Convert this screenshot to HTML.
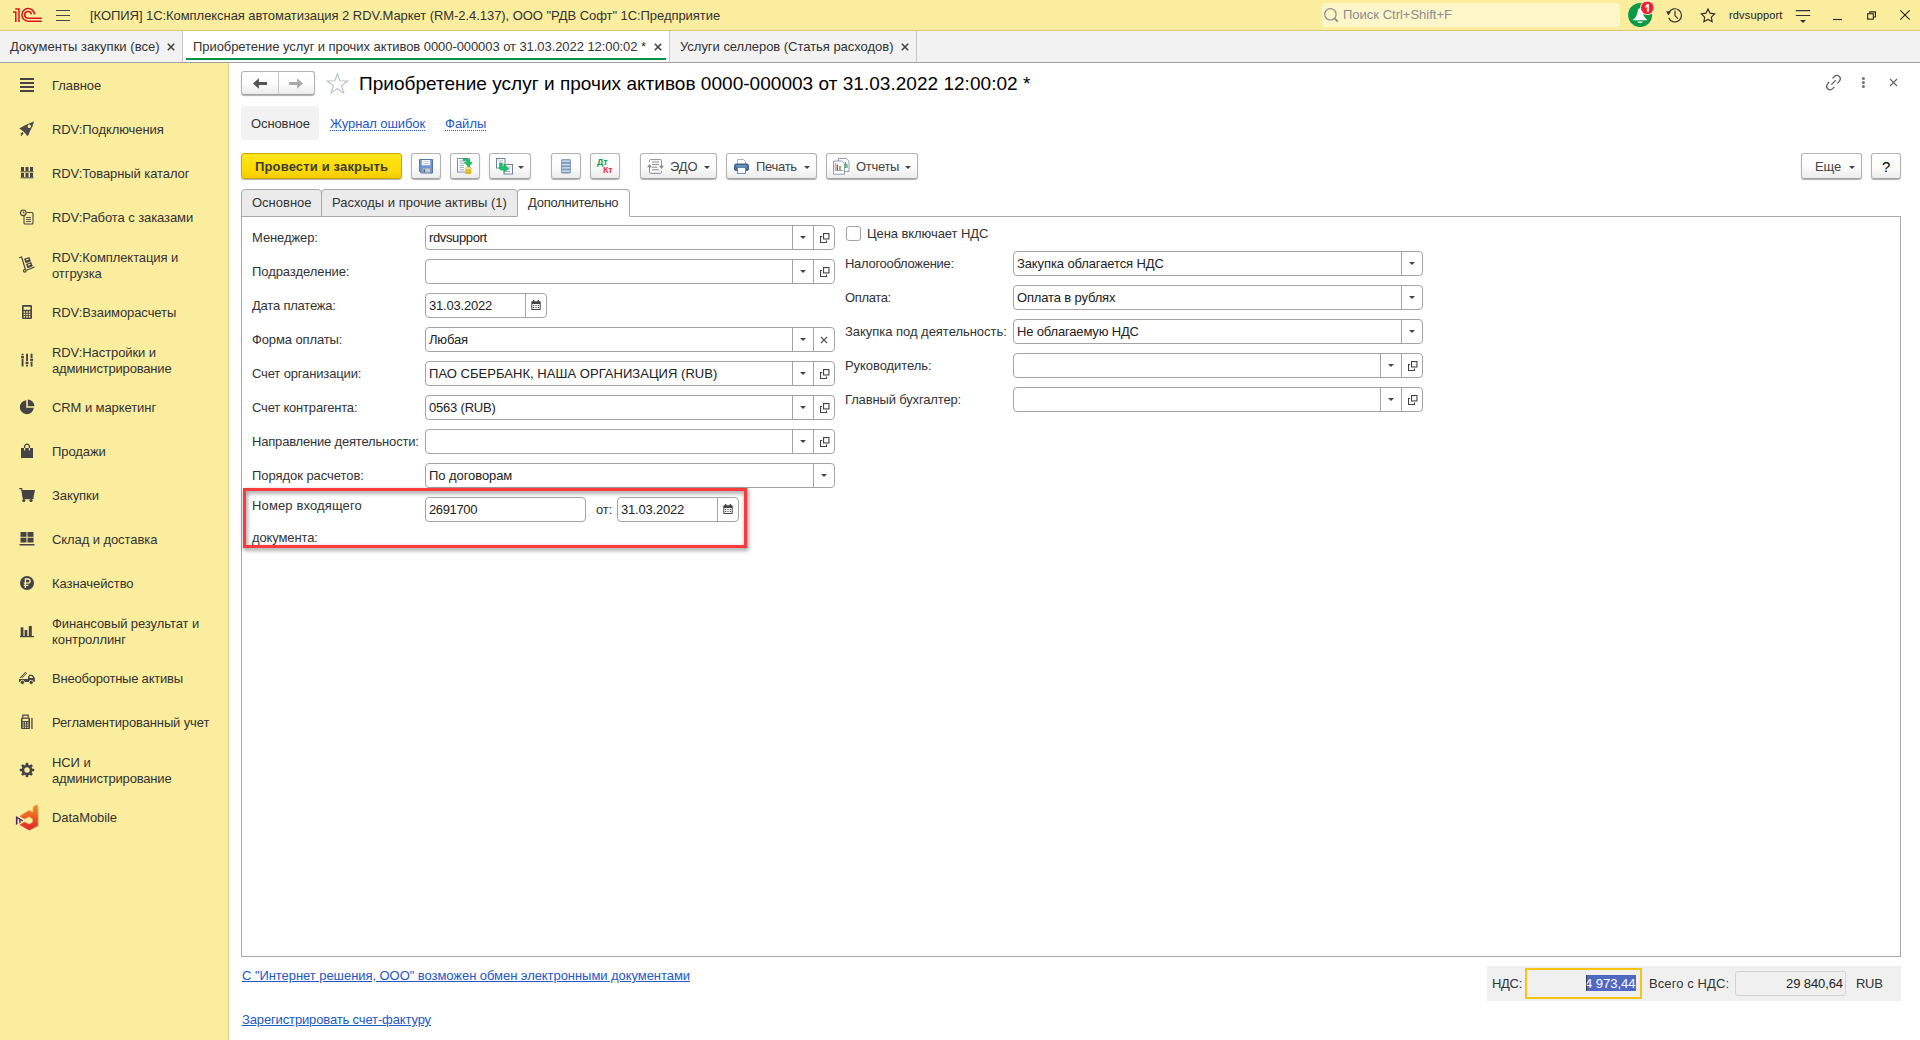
<!DOCTYPE html>
<html lang="ru">
<head>
<meta charset="utf-8">
<title>1C</title>
<style>
*{box-sizing:border-box;margin:0;padding:0}
html,body{width:1920px;height:1040px;overflow:hidden;background:#fff}
body{font-family:"Liberation Sans",sans-serif;font-size:13px;color:#333;position:relative}
.abs{position:absolute}
.t{position:absolute;white-space:nowrap;line-height:16px}
/* title bar */
#titlebar{position:absolute;left:0;top:0;width:1920px;height:31px;background:#fbed9e;border-bottom:1px solid #d9c774}
#titlebar .ttl{left:90px;top:8px;font-size:13px;color:#333;letter-spacing:-.057px}
#search{position:absolute;left:1322px;top:3px;width:298px;height:24px;background:#fdf6c9;border-radius:4px}
#search .t{left:21px;top:4px;font-size:13px;color:#8c8c8c}
/* tab bar */
#tabbar{position:absolute;left:0;top:31px;width:1920px;height:32px;background:#f2f2f2;border-bottom:1px solid #a0a0a0}
.tab{position:absolute;top:0;height:31px;border-right:1px solid #c8c8c8;font-size:14px;color:#333}
.tab .t{top:8px;font-size:13px;letter-spacing:-.068px}
.tab.act{background:#fff}
.tab.act:after{content:"";position:absolute;left:3px;right:3px;bottom:2px;height:2px;background:#009646}
.tabx{position:absolute;top:12px;width:8px;height:8px}
/* sidebar */
#side{position:absolute;left:0;top:63px;width:229px;height:977px;background:#fbed9e;border-right:1px solid #d9cc86}
.si{position:absolute;left:52px;letter-spacing:-.08px;font-size:13px;color:#333;line-height:16px;white-space:nowrap}
.ic{position:absolute;left:17px;width:20px;height:20px}
/* main */
.lbl{position:absolute;white-space:nowrap;letter-spacing:-.1px;font-size:13px;line-height:16px;color:#333}
.fld{position:absolute;height:25px;border:1px solid #a3a3a3;border-radius:4px;background:#fff;font-size:13px;line-height:23px;color:#222;padding-left:3px;white-space:nowrap;overflow:hidden}
.fb{position:absolute;top:0;bottom:0;width:21px;border-left:1px solid #a3a3a3}
.fb.dd:after{content:"";position:absolute;left:7px;top:10px;border-left:3px solid transparent;border-right:3px solid transparent;border-top:3.5px solid #444}
.btn{position:absolute;height:26px;border:1px solid #b3b3b3;border-bottom-color:#a2a2a2;border-radius:3px;background:linear-gradient(#ffffff 0%,#fdfdfd 50%,#ececec 100%);box-shadow:0 1px 1px rgba(0,0,0,.32);font-size:13px;color:#333}
.btn .t{top:4px;font-size:13px;letter-spacing:-.1px;color:#444}
.car{position:absolute;top:12px;border-left:3px solid transparent;border-right:3px solid transparent;border-top:3px solid #444}
a.lnk{position:absolute;white-space:nowrap;color:#2458c4;font-size:13px;line-height:16px;text-decoration:underline}

.dl{color:#2458c4;text-decoration:underline dotted;text-underline-offset:2px;text-decoration-thickness:1px}
.ybtn{background:linear-gradient(#ffe420 0%,#ffdc00 60%,#f5cc00 100%);border-color:#c9a800}
.itab{position:absolute;top:189px;height:28px;background:#ebebeb;border:1px solid #a8a8a8;border-radius:4px 4px 0 0}
.itab.act{background:#fff;border-bottom-color:#fff}
</style>
</head>
<body>
<!-- TITLE BAR -->
<div id="titlebar">
  <svg class="abs" style="left:12px;top:7px" width="32" height="16" viewBox="0 0 32 16"><g fill="none" stroke="#d9141c" stroke-width="1.500"><path d="M3.200 1.900 H7 V14.900"/><path d="M1 4.900 H3.800 V14.900"/><path d="M22.500 7.400 A6.300 6.300 0 1 0 16 14.200 H29.800"/><path d="M19.300 7.400 A3.300 3.300 0 1 0 16 11.200 H29.800"/></g></svg>
  <svg class="abs" style="left:55px;top:9px" width="16" height="13" viewBox="0 0 16 13"><g stroke="#444" stroke-width="1.2"><path d="M1 1.5h14M1 6.5h14M1 11.5h14"/></g></svg>
  <div class="t ttl">[КОПИЯ] 1С:Комплексная автоматизация 2 RDV.Маркет (RM-2.4.137), ООО "РДВ Софт" 1С:Предприятие</div>
  <div id="search">
    <svg class="abs" style="left:1px;top:4px" width="17" height="17" viewBox="0 0 17 17"><circle cx="7.400" cy="7.300" r="5.700" fill="none" stroke="#8a8a8a" stroke-width="1.200"/><path d="M11.500 11.400 L14.800 14.600" stroke="#8a8a8a" stroke-width="1.700"/></svg>
    <div class="t">Поиск Ctrl+Shift+F</div>
  </div>

  <svg class="abs" style="left:1626px;top:0px" width="32" height="30" viewBox="0 0 32 30"><circle cx="14.100" cy="15" r="12" fill="#0e9944"/><path d="M14.100 8.200 C12.600 8.200 11.900 9.400 11.700 11 C11.300 14.500 10 17.600 6.600 20.200 H21.600 C18.200 17.600 16.900 14.500 16.500 11 C16.300 9.400 15.600 8.200 14.100 8.200 Z" fill="#fff"/><path d="M11.200 21.400 H17 C16.400 22.600 15.400 23 14.100 23 C12.800 23 11.800 22.600 11.200 21.400 Z" fill="#fff"/><circle cx="21.300" cy="7.800" r="7.300" fill="#fff"/><circle cx="21.300" cy="7.800" r="6.400" fill="#f2232a"/><path d="M19 6.600 L21.300 4 H22.900 V11.800 H20.900 V6.800 L19.600 8 Z" fill="#fff"/></svg>
  <svg class="abs" style="left:1665px;top:6px" width="20" height="19" viewBox="0 0 20 19"><g fill="none" stroke="#333" stroke-width="1.200"><path d="M3.900 6.600 A6.600 6.600 0 1 1 3.700 11.700"/><path d="M10 5 V9.600 L12.600 12.300" stroke-linecap="round"/></g><path d="M1 5.200 L6 5.600 L3.400 9.400 Z" fill="#333"/></svg>
  <svg class="abs" style="left:1699px;top:6px" width="18" height="18" viewBox="0 0 18 18"><path d="M9.00 3.00 L11.06 7.17 L15.66 7.84 L12.33 11.08 L13.11 15.66 L9.00 13.50 L4.89 15.66 L5.67 11.08 L2.34 7.84 L6.94 7.17 Z" fill="none" stroke="#2c2c2c" stroke-width="1.150" stroke-linejoin="miter"/></svg>
  <div class="t" style="left:1729px;top:7px;font-size:11px;color:#222;letter-spacing:.15px" id="user">rdvsupport</div>
  <svg class="abs" style="left:1795px;top:9px" width="16" height="15" viewBox="0 0 16 15"><g stroke="#333" stroke-width="1.200"><path d="M0.800 1.600 H15.200 M0.800 6.500 H15.200"/></g><path d="M5 11.100 H11 L8 14 Z" fill="#333"/></svg>
  <svg class="abs" style="left:1832px;top:18px" width="11" height="3" viewBox="0 0 11 3"><path d="M1 1.500 H10" stroke="#333" stroke-width="1.200"/></svg>
  <svg class="abs" style="left:1866px;top:10px" width="11" height="11" viewBox="0 0 11 11"><g fill="none" stroke="#262626" stroke-width="1.100"><rect x="1.650" y="3.750" width="5.700" height="5.400"/><path d="M3.750 3.200 V1.850 H9.450 V6.950 H7.900"/></g></svg>
  <svg class="abs" style="left:1899px;top:10px" width="12" height="11" viewBox="0 0 12 11"><path d="M1.300 0.300 L10.700 9.700 M10.700 0.300 L1.300 9.700" stroke="#262626" stroke-width="1.050"/></svg>
</div>
<!-- TAB BAR -->
<div id="tabbar">
  <div class="tab" style="left:0;width:183px"><div class="t" style="left:10px;letter-spacing:.03px">Документы закупки (все)</div><svg class="tabx" style="left:167px" width="8" height="8" viewBox="0 0 8 8"><path d="M0.800 0.800 L7.200 7.200 M7.200 0.800 L0.800 7.200" stroke="#444" stroke-width="1.600"/></svg></div>
  <div class="tab act" style="left:183px;width:487px"><div class="t" style="left:10px">Приобретение услуг и прочих активов 0000-000003 от 31.03.2022 12:00:02 *</div><svg class="tabx" style="left:471px" width="8" height="8" viewBox="0 0 8 8"><path d="M0.800 0.800 L7.200 7.200 M7.200 0.800 L0.800 7.200" stroke="#444" stroke-width="1.600"/></svg></div>
  <div class="tab" style="left:670px;width:247px"><div class="t" style="left:10px;letter-spacing:-.03px">Услуги селлеров (Статья расходов)</div><svg class="tabx" style="left:231px" width="8" height="8" viewBox="0 0 8 8"><path d="M0.800 0.800 L7.200 7.200 M7.200 0.800 L0.800 7.200" stroke="#444" stroke-width="1.600"/></svg></div>
</div>
<!-- SIDEBAR -->
<div id="side">
  <!-- icons: each svg 20x20 box positioned left:17 -->
  <svg class="ic" style="top:13px" width="20" height="20" viewBox="0 0 20 20"><g fill="#444"><rect x="3" y="2" width="14" height="2"/><rect x="3" y="6" width="14" height="2"/><rect x="3" y="10" width="14" height="2"/><rect x="3" y="14" width="14" height="2"/></g></svg>
  <div class="si" style="top:15px">Главное</div>

  <svg class="ic" style="top:56px" width="20" height="20" viewBox="0 0 20 20"><path fill="#4a4a4a" fill-rule="evenodd" d="M16.900 2.200 L13.150 3.900 L8.500 6 L2.200 9.400 L5.650 11.700 L9.100 15.200 L10 16.900 L11.400 16.300 L12.900 12.300 L15.500 7.400 Z M12.300 5.600 a1.700 1.700 0 1 0 .01 0 Z"/><path fill="#4a4a4a" d="M5.300 13 L6.600 14.600 L4.500 16.900 L3.600 16.600 L4.600 15 L3 15.300 Z"/></svg>
  <div class="si" style="top:59px">RDV:Подключения</div>

  <svg class="ic" style="top:100px" width="20" height="20" viewBox="0 0 20 20"><g fill="#444"><rect x="4" y="4" width="3" height="4"/><rect x="8.500" y="4" width="3" height="4"/><rect x="13" y="4" width="3" height="4"/><rect x="3.500" y="8.300" width="13" height="1"/><rect x="4" y="10" width="3" height="4"/><rect x="8.500" y="10" width="3" height="4"/><rect x="13" y="10" width="3" height="4"/><rect x="3.500" y="14.300" width="13" height="1"/></g></svg>
  <div class="si" style="top:103px">RDV:Товарный каталог</div>

  <svg class="ic" style="top:144px" width="20" height="20" viewBox="0 0 20 20"><g fill="none" stroke="#444" stroke-width="1.1"><circle cx="6.300" cy="5.800" r="2.800" fill="#fbed9e"/><path d="M9.500 5.500 H15 a1 1 0 0 1 1 1 V16 a1 1 0 0 1 -1 1 H8 a1 1 0 0 1 -1 -1 V9"/><path d="M6.300 4.200 V6 H7.700" stroke-width=".9"/><path d="M9 10.500 h5 M9 12.500 h5 M9 14.500 h5" stroke-width=".9"/></g></svg>
  <div class="si" style="top:147px">RDV:Работа с заказами</div>

  <svg class="ic" style="top:191px" width="20" height="20" viewBox="0 0 20 20"><g fill="none" stroke="#444" stroke-width="1.2"><path d="M2.200 3.800 L4.600 3 L8.400 15.500"/><circle cx="7.800" cy="16.800" r="1.300"/><path d="M9.300 16.200 L17.500 13"/></g><g fill="#444" transform="rotate(-20 12 9)"><rect x="8.800" y="3.400" width="5.600" height="4.600"/><rect x="8.800" y="8.800" width="5.600" height="4.600"/></g><g fill="#fbed9e" transform="rotate(-20 12 9)"><rect x="10.300" y="4.600" width="2.600" height="1.200"/><rect x="10.300" y="10" width="2.600" height="1.200"/></g></svg>
  <div class="si" style="top:187px">RDV:Комплектация и<br>отгрузка</div>

  <svg class="ic" style="top:239px" width="20" height="20" viewBox="0 0 20 20"><rect x="5" y="3" width="10" height="14" rx="1.300" fill="#444"/><rect x="6.600" y="4.800" width="6.800" height="3" fill="#fbed9e"/><g fill="#fbed9e"><rect x="6.600" y="9.300" width="1.600" height="1.500"/><rect x="9.200" y="9.300" width="1.600" height="1.500"/><rect x="11.800" y="9.300" width="1.600" height="1.500"/><rect x="6.600" y="11.700" width="1.600" height="1.500"/><rect x="9.200" y="11.700" width="1.600" height="1.500"/><rect x="11.800" y="11.700" width="1.600" height="1.500"/><rect x="6.600" y="14.100" width="1.600" height="1.500"/><rect x="9.200" y="14.100" width="1.600" height="1.500"/><rect x="11.800" y="14.100" width="1.600" height="1.500"/></g></svg>
  <div class="si" style="top:242px">RDV:Взаиморасчеты</div>

  <svg class="ic" style="top:287px" width="20" height="20" viewBox="0 0 20 20"><g fill="#444"><rect x="4.600" y="3.700" width="1.900" height="12.800"/><rect x="9.100" y="3.700" width="1.900" height="12.800"/><rect x="13.600" y="3.700" width="1.900" height="12.800"/></g><g fill="#fbed9e"><rect x="4" y="5.400" width="3.200" height="3.600"/><rect x="8.500" y="11.200" width="3.200" height="3.600"/><rect x="13" y="8" width="3.200" height="3.600"/></g><g fill="#444"><rect x="4.100" y="6.100" width="2.900" height="2.200"/><rect x="8.600" y="11.900" width="2.900" height="2.200"/><rect x="13.100" y="8.700" width="2.900" height="2.200"/></g></svg>
  <div class="si" style="top:282px">RDV:Настройки и<br><span style="letter-spacing:-.18px">администрирование</span></div>

  <svg class="ic" style="top:334px" width="20" height="20" viewBox="0 0 20 20"><path fill="#444" d="M9.200 3.200 A7 7 0 1 0 16.800 10.800 H9.200 Z"/><path fill="#444" d="M10.800 2.600 A6.800 6.800 0 0 1 17.400 9.200 H10.800 Z"/></svg>
  <div class="si" style="top:337px">CRM и маркетинг</div>

  <svg class="ic" style="top:378px" width="20" height="20" viewBox="0 0 20 20"><path fill="#444" d="M4 7 H16 V17 H4 Z"/><path d="M7.600 7.200 V5.600 a2.400 2.400 0 0 1 4.800 0 V7.200" fill="none" stroke="#444" stroke-width="1.300"/><path d="M7.600 7 V9.400 M12.400 7 V9.400" stroke="#fbed9e" stroke-width="1.100"/></svg>
  <div class="si" style="top:381px">Продажи</div>

  <svg class="ic" style="top:422px" width="20" height="20" viewBox="0 0 20 20"><path fill="#444" d="M4.800 5 H18 L16.300 13.300 H6 Z"/><path d="M2.200 3.600 H4.600 L6.400 13" fill="none" stroke="#444" stroke-width="1.300"/><rect x="5.800" y="13" width="10.600" height="1.200" fill="#444"/><circle cx="6.800" cy="15.500" r="1.600" fill="#444"/><circle cx="14" cy="15.500" r="1.600" fill="#444"/></svg>
  <div class="si" style="top:425px">Закупки</div>

  <svg class="ic" style="top:466px" width="20" height="20" viewBox="0 0 20 20"><g fill="#444"><rect x="3.500" y="3" width="6" height="4.800"/><rect x="10.500" y="3" width="6" height="4.800"/><rect x="3.500" y="8.700" width="6" height="4.800"/><rect x="10.500" y="8.700" width="6" height="4.800"/><rect x="2.500" y="15" width="15" height="1.500"/></g></svg>
  <div class="si" style="top:469px">Склад и доставка</div>

  <svg class="ic" style="top:510px" width="20" height="20" viewBox="0 0 20 20"><circle cx="10" cy="10" r="7" fill="#444"/><path d="M8.400 15 V6 H11 a2.100 2.100 0 0 1 0 4.200 H6.800 M6.800 12.300 H11.400" fill="none" stroke="#fbed9e" stroke-width="1.300"/></svg>
  <div class="si" style="top:513px">Казначейство</div>

  <svg class="ic" style="top:558px" width="20" height="20" viewBox="0 0 20 20"><g fill="#444"><rect x="3.700" y="6.300" width="2.700" height="9"/><rect x="7.600" y="9" width="2.700" height="6.300"/><rect x="11.800" y="5" width="3" height="10.300"/><rect x="3" y="15" width="14" height="1.200"/></g></svg>
  <div class="si" style="top:553px">Финансовый результат и<br>контроллинг</div>

  <svg class="ic" style="top:605px" width="20" height="20" viewBox="0 0 20 20"><path fill="#444" d="M2 11 H11 V9 L12.200 6.800 H15.400 L17.800 10 V14 H2 Z"/><path fill="#fbed9e" d="M12.600 8 H14.800 L16.200 10 H12.600 Z"/><path d="M2.500 10 L8.500 4 L10 5.200 L5.500 10 Z" fill="#444"/><path d="M4.500 9.800 L9 5.200" stroke="#fbed9e" stroke-width=".8"/><circle cx="5.400" cy="14.400" r="2.100" fill="#444" stroke="#fbed9e" stroke-width=".9"/><circle cx="14.200" cy="14.400" r="2.100" fill="#444" stroke="#fbed9e" stroke-width=".9"/></svg>
  <div class="si" style="top:608px;letter-spacing:-.22px">Внеоборотные активы</div>

  <svg class="ic" style="top:649px" width="20" height="20" viewBox="0 0 20 20"><rect x="4" y="5.500" width="9" height="11.500" rx="1" fill="#444"/><path d="M5.800 5.500 V3.200 H11.200 V5.500" fill="none" stroke="#444" stroke-width="1.200"/><rect x="5.500" y="6.800" width="6" height="2.200" fill="#fbed9e"/><g fill="#fbed9e"><rect x="5.500" y="10.200" width="1.300" height="1.300"/><rect x="7.850" y="10.200" width="1.300" height="1.300"/><rect x="10.200" y="10.200" width="1.300" height="1.300"/><rect x="5.500" y="12.400" width="1.300" height="1.300"/><rect x="7.850" y="12.400" width="1.300" height="1.300"/><rect x="10.200" y="12.400" width="1.300" height="1.300"/><rect x="5.500" y="14.600" width="1.300" height="1.300"/><rect x="7.850" y="14.600" width="1.300" height="1.300"/><rect x="10.200" y="14.600" width="1.300" height="1.300"/></g><rect x="14.300" y="6" width="1.300" height="11" fill="#444"/></svg>
  <div class="si" style="top:652px;letter-spacing:-.13px">Регламентированный учет</div>

  <svg class="ic" style="top:697px" width="20" height="20" viewBox="0 0 20 20"><g fill="#444"><circle cx="10" cy="10" r="5.400"/><g id="gt"><rect x="8.700" y="2.800" width="2.600" height="14.400" rx=".6"/></g><use href="#gt" transform="rotate(45 10 10)"/><use href="#gt" transform="rotate(90 10 10)"/><use href="#gt" transform="rotate(135 10 10)"/></g><circle cx="10" cy="10" r="2.700" fill="#fbed9e"/></svg>
  <div class="si" style="top:692px">НСИ и<br><span style="letter-spacing:-.18px">администрирование</span></div>

  <svg class="abs" style="left:13px;top:741px" width="28" height="28" viewBox="0 0 28 28"><defs><linearGradient id="dmg" x1="0" y1="0" x2="0" y2="1"><stop offset="0" stop-color="#f39320"/><stop offset="1" stop-color="#e2222b"/></linearGradient></defs><path d="M20.200 3.200 L23.500 1 L24.800 2 L24.800 21.600 L16.200 26 L7.200 20.800 L11.400 18.300 L16.200 20.600 L20 18.400 L20 14.800 L16.200 12.600 L11.400 14.600 L7.200 12.200 L16.200 6.600 L20.200 9 Z" fill="url(#dmg)" stroke="url(#dmg)" stroke-width=".8" stroke-linejoin="round"/><path d="M2.900 12 L4.500 13 L4.500 20 L2.900 21 Z M4.500 13 L10 16.300 L9.500 17.500 L4.500 14.600 Z M6.300 15.500 L7.600 16.300 L7.600 18.800 L6.300 19.400 Z" fill="#48206f"/></svg>
  <div class="si" style="top:747px">DataMobile</div>
</div>
<!-- MAIN -->
<div id="main">
  <!-- nav buttons -->
  <div class="btn" style="left:241px;top:71px;width:74px;height:24px">
    <div class="abs" style="left:36px;top:0;bottom:0;width:1px;background:#c9c9c9"></div>
    <svg class="abs" style="left:11px;top:5px" width="16" height="13" viewBox="0 0 16 13"><path d="M0 6.500 L5.900 1.200 V5.100 H14 V7.900 H5.900 V11.800 Z" fill="#555"/></svg>
    <svg class="abs" style="left:47px;top:5px" width="16" height="13" viewBox="0 0 16 13"><path d="M14 6.500 L8.100 1.200 V5.100 H0 V7.900 H8.100 V11.800 Z" fill="#a9a9a9"/></svg>
  </div>
  <svg class="abs" style="left:325px;top:71px" width="25" height="24" viewBox="0 0 25 24"><path d="M12.40 2.60 L14.93 9.82 L22.58 9.99 L16.49 14.63 L18.69 21.96 L12.40 17.60 L6.11 21.96 L8.31 14.63 L2.22 9.99 L9.87 9.82 Z" fill="#fff" stroke="#b4bec8" stroke-width="1.100" stroke-linejoin="miter"/></svg>
  <div class="t" style="left:359px;top:72px;font-size:19px;line-height:24px;color:#000;letter-spacing:.03px" id="ptitle">Приобретение услуг и прочих активов 0000-000003 от 31.03.2022 12:00:02 *</div>
  <!-- top-right form icons -->
  <svg class="abs" style="left:1824px;top:73px" width="19" height="19" viewBox="0 0 19 19"><g fill="none" stroke="#5a5a5a" stroke-width="1.200" stroke-linecap="butt"><path d="M8.500 5.400 L10.600 3.300 A3.400 3.400 0 0 1 15.400 8.100 L13.400 10.300"/><path d="M10.400 13.800 L8.300 15.900 A3.400 3.400 0 0 1 3.500 11.100 L5.200 9"/><path d="M7.300 11.600 L11.900 7.100"/></g></svg>
  <svg class="abs" style="left:1860px;top:76px" width="7" height="13" viewBox="0 0 7 13"><g fill="#767676"><circle cx="3.400" cy="2.500" r="1.550"/><circle cx="3.400" cy="6.500" r="1.550"/><circle cx="3.400" cy="10.500" r="1.550"/></g></svg>
  <svg class="abs" style="left:1889px;top:78px" width="9" height="9" viewBox="0 0 9 9"><path d="M1 1 L8 8 M8 1 L1 8" stroke="#606060" stroke-width="1.100"/></svg>

  <!-- sub nav -->
  <div class="abs" style="left:241px;top:106px;width:78px;height:34px;background:#f2f2f2;border-radius:4px"></div>
  <div class="t" style="left:251px;top:116px;color:#333;letter-spacing:-.1px">Основное</div>
  <div class="t dl" style="left:330px;top:116px;letter-spacing:-.1px">Журнал ошибок</div>
  <div class="t dl" style="left:445px;top:116px">Файлы</div>

  <!-- toolbar -->
  <div class="btn ybtn" style="left:241px;top:153px;width:161px"><div class="t" style="left:13px;top:5px;font-weight:bold;font-size:13px;color:#3c3c3c;letter-spacing:.15px">Провести и закрыть</div></div>
  <div class="btn" style="left:411px;top:153px;width:30px" id="b_save"><svg class="abs" style="left:7px;top:5px" width="14" height="14.500" viewBox="0 0 15 15" preserveAspectRatio="none"><path d="M0.500 0.500 H14.500 V14.500 H2.500 L0.500 12.500 Z" fill="#6f95d3" stroke="#4a6ea8"/><rect x="3" y="1" width="9" height="5.500" fill="#fff"/><path d="M4.500 2.700 H10.500 M4.500 4.700 H10.500" stroke="#a9bfe0" stroke-width=".9"/><rect x="3.500" y="9.500" width="8.500" height="4.500" fill="#c9d0d0" stroke="#8a9aa8" stroke-width=".6"/><rect x="4.800" y="10.600" width="1.800" height="3" fill="#3f67a6"/></svg></div>
  <div class="btn" style="left:450px;top:153px;width:30px" id="b_post"><svg class="abs" style="left:6px;top:4px" width="18" height="18" viewBox="0 0 18 18"><rect x="0.500" y="0.500" width="12" height="13.500" fill="#fff" stroke="#7f92ad"/><path d="M2.500 3 H8 M2.500 5.200 H8 M2.500 7.400 H7 M2.500 9.600 H7 M2.500 11.800 H7" stroke="#8fa3bf" stroke-width=".9"/><path d="M6.200 0.700 C10.500 0.200 12.600 1.600 12.700 4.300 H15.200 L11.300 9 L7.400 4.300 H9.900 C9.800 3 8.600 2.500 6.200 2.600 Z" fill="#14c86a" stroke="#0a9c4e" stroke-width=".6"/><rect x="8.200" y="10.400" width="6.200" height="4.800" fill="#f2cf3c"/><ellipse cx="11.300" cy="10.400" rx="3.100" ry="1.100" fill="#f9e68a" stroke="#d0a81e" stroke-width=".5"/><ellipse cx="11.300" cy="15.200" rx="3.100" ry="1.100" fill="#e6bd2a"/><path d="M8.200 12 C9.200 13.100 13.400 13.100 14.400 12 M8.200 13.700 C9.200 14.800 13.400 14.800 14.400 13.700" stroke="#c99f14" stroke-width=".6" fill="none"/></svg></div>
  <div class="btn" style="left:489px;top:153px;width:42px" id="b_copy"><svg class="abs" style="left:6px;top:4px" width="18" height="18" viewBox="0 0 18 18"><rect x="0.500" y="0.500" width="8.500" height="9.500" fill="#fff" stroke="#70809a"/><path d="M2.500 3 H7" stroke="#8fa3bf" stroke-width=".9"/><rect x="8" y="6.500" width="8.500" height="9.500" fill="#fff" stroke="#70809a"/><path d="M12 9 H14.500 M12 11.200 H14.500 M10 13.600 H14.500" stroke="#8fa3bf" stroke-width=".9"/><path d="M3.400 5 H6.300 V8.700 H8.300 V6.400 L12.600 10.400 L8.300 14.300 V12 H5.600 C4.200 12 3.400 11.200 3.400 9.800 Z" fill="#14c86a" stroke="#0a9c4e" stroke-width=".6"/></svg><div class="car" style="left:28px"></div></div>
  <div class="btn" style="left:551px;top:153px;width:30px" id="b_list"><svg class="abs" style="left:9px;top:5px" width="10" height="14.500" viewBox="0 0 11 15" preserveAspectRatio="none"><rect x="0.400" y="0.400" width="10.200" height="14.200" rx="1.400" fill="#7d9dbd" stroke="#6a8bad" stroke-width=".8"/><path d="M1.200 2.300 H9.800 M1.200 5.700 H9.800 M1.200 9.100 H9.800 M1.200 12.500 H9.800" stroke="#dbe6f0" stroke-width="1.300"/></svg></div>
  <div class="btn" style="left:590px;top:153px;width:30px" id="b_dtkt"><div class="t" style="left:6px;top:4px;font-size:9px;line-height:9px;font-weight:bold;color:#0b9a48;letter-spacing:-.2px">Дт</div><div class="t" style="left:12px;top:12px;font-size:9px;line-height:9px;font-weight:bold;color:#e2383c;letter-spacing:-.2px">Кт</div></div>
  <div class="btn" style="left:640px;top:153px;width:77px" id="b_edo"><svg class="abs" style="left:6px;top:5px" width="17" height="15" viewBox="0 0 17 15"><g fill="none" stroke="#8c8c8c" stroke-width="1"><path d="M2.500 3 V1.600 a1 1 0 0 1 1 -1 H13.500 a1 1 0 0 1 1 1 V7"/><path d="M14.500 12 V13.400 a1 1 0 0 1 -1 1 H3.500 a1 1 0 0 1 -1 -1 V8"/><path d="M5 3 H12 M5 5.600 H12 M5 8.200 H10.500 M5 10.800 H12 " stroke-width="1"/></g><path d="M0 8.200 L2.500 5 L5 8.200 Z M12 6.800 L14.500 10 L17 6.800 Z" fill="#8c8c8c"/></svg><div class="t" style="left:29px;top:5px">ЭДО</div><div class="car" style="left:63px"></div></div>
  <div class="btn" style="left:726px;top:153px;width:91px" id="b_print"><svg class="abs" style="left:7px;top:5px" width="15" height="15" viewBox="0 0 15 15"><path d="M3.500 5 V0.500 H9.300 L11.500 2.700 V5" fill="#fff" stroke="#9aa6b5" stroke-width=".9"/><rect x="0.500" y="5" width="14" height="6.500" rx="1.600" fill="#44709f" stroke="#2f5785" stroke-width=".9"/><path d="M2.200 7 H12.800" stroke="#9cb8d6" stroke-width=".9"/><rect x="3.500" y="8.500" width="8" height="5.900" fill="#fff" stroke="#5e7fa6" stroke-width=".9"/></svg><div class="t" style="left:29px;top:5px;letter-spacing:-.3px">Печать</div><div class="car" style="left:77px"></div></div>
  <div class="btn" style="left:826px;top:153px;width:92px" id="b_rep"><svg class="abs" style="left:6px;top:4px" width="17" height="17" viewBox="0 0 17 17"><path d="M5.500 0.500 H13.300 L16 3.200 V13.500 H5.500 Z" fill="#fff" stroke="#8293ab" stroke-width=".9"/><path d="M12.600 4 V10 M14 6 V10" stroke="#3fae49" stroke-width="1.100"/><path d="M0.500 3 H8.800 L11.500 5.700 V16.200 H0.500 Z" fill="#fff" stroke="#8293ab" stroke-width=".9"/><path d="M2.300 5 V12.500 H10" stroke="#7d8ea6" stroke-width=".8" fill="none"/><path d="M4.300 6.500 V12" stroke="#e8392e" stroke-width="1.500"/><path d="M7 8 V12" stroke="#3fae49" stroke-width="1.500"/></svg><div class="t" style="left:29px;top:5px;letter-spacing:-.3px">Отчеты</div><div class="car" style="left:78px"></div></div>
  <div class="btn" style="left:1801px;top:153px;width:61px"><div class="t" style="left:13px;top:5px">Еще</div><div class="car" style="left:47px"></div></div>
  <div class="btn" style="left:1871px;top:153px;width:30px"><div class="t" style="left:10px;top:5px;color:#000;font-size:15px;letter-spacing:0">?</div></div>

  <!-- inner tabs + panel -->
  <div class="abs" style="left:241px;top:216px;width:1660px;height:741px;border:1px solid #a8a8a8"></div>
  <div class="itab" style="left:241px;width:81px"><div class="t" style="left:10px;top:5px">Основное</div></div>
  <div class="itab" style="left:321px;width:197px"><div class="t" style="left:10px;top:5px">Расходы и прочие активы (1)</div></div>
  <div class="itab act" style="left:517px;width:113px"><div class="t" style="left:10px;top:5px;letter-spacing:-.25px">Дополнительно</div></div>

  <!-- form -->
<div class="lbl" style="left:252px;top:230px;letter-spacing:-0.099px">Менеджер:</div>
<div class="fld" style="left:425px;top:225px;width:410px;letter-spacing:-0.369px">rdvsupport<div class="fb dd" style="right:21px"></div><div class="fb" style="right:0px"><svg class="abs" style="left:6px;top:7px" width="10" height="10" viewBox="0 0 10 10"><g fill="none" stroke="#444" stroke-width="1.1"><rect x="3.55" y="0.55" width="5.4" height="5.4"/><path d="M2.2 3.5 H0.55 V9.45 H6.5 V7.6"/></g></svg></div></div>
<div class="lbl" style="left:252px;top:264px;letter-spacing:-0.066px">Подразделение:</div>
<div class="fld" style="left:425px;top:259px;width:410px"><div class="fb dd" style="right:21px"></div><div class="fb" style="right:0px"><svg class="abs" style="left:6px;top:7px" width="10" height="10" viewBox="0 0 10 10"><g fill="none" stroke="#444" stroke-width="1.1"><rect x="3.55" y="0.55" width="5.4" height="5.4"/><path d="M2.2 3.5 H0.55 V9.45 H6.5 V7.6"/></g></svg></div></div>
<div class="lbl" style="left:252px;top:298px;letter-spacing:-0.201px">Дата платежа:</div>
<div class="fld" style="left:425px;top:293px;width:122px;letter-spacing:-0.198px">31.03.2022<div class="fb" style="right:0px"><svg class="abs" style="left:5px;top:6px" width="10" height="10" viewBox="0 0 10 10"><path fill="#444" d="M0.300 2 a.7 .7 0 0 1 .7 -.7 H9 a.7 .7 0 0 1 .7 .7 V9.300 a.7 .7 0 0 1 -.7 .7 H1 a.7 .7 0 0 1 -.7 -.7 Z M1.300 4 V9 H8.700 V4 Z" fill-rule="evenodd"/><rect x="2" y="0" width="1.300" height="2" fill="#444"/><rect x="6.700" y="0" width="1.300" height="2" fill="#444"/><g fill="#444"><rect x="2" y="5" width="1.200" height="1"/><rect x="4.400" y="5" width="1.200" height="1"/><rect x="6.800" y="5" width="1.200" height="1"/><rect x="2" y="7" width="1.200" height="1"/><rect x="4.400" y="7" width="1.200" height="1"/><rect x="6.800" y="7" width="1.200" height="1"/></g></svg></div></div>
<div class="lbl" style="left:252px;top:332px;letter-spacing:-0.12px">Форма оплаты:</div>
<div class="fld" style="left:425px;top:327px;width:410px;letter-spacing:-0.175px">Любая<div class="fb dd" style="right:21px"></div><div class="fb" style="right:0px"><svg class="abs" style="left:6px;top:8px" width="8" height="8" viewBox="0 0 8 8"><path d="M1 1 L7 7 M7 1 L1 7" stroke="#555" stroke-width="1.1"/></svg></div></div>
<div class="lbl" style="left:252px;top:366px;letter-spacing:-0.147px">Счет организации:</div>
<div class="fld" style="left:425px;top:361px;width:410px;letter-spacing:0.037px">ПАО СБЕРБАНК, НАША ОРГАНИЗАЦИЯ (RUB)<div class="fb dd" style="right:21px"></div><div class="fb" style="right:0px"><svg class="abs" style="left:6px;top:7px" width="10" height="10" viewBox="0 0 10 10"><g fill="none" stroke="#444" stroke-width="1.1"><rect x="3.55" y="0.55" width="5.4" height="5.4"/><path d="M2.2 3.5 H0.55 V9.45 H6.5 V7.6"/></g></svg></div></div>
<div class="lbl" style="left:252px;top:400px;letter-spacing:-0.191px">Счет контрагента:</div>
<div class="fld" style="left:425px;top:395px;width:410px;letter-spacing:-0.204px">0563 (RUB)<div class="fb dd" style="right:21px"></div><div class="fb" style="right:0px"><svg class="abs" style="left:6px;top:7px" width="10" height="10" viewBox="0 0 10 10"><g fill="none" stroke="#444" stroke-width="1.1"><rect x="3.55" y="0.55" width="5.4" height="5.4"/><path d="M2.2 3.5 H0.55 V9.45 H6.5 V7.6"/></g></svg></div></div>
<div class="lbl" style="left:252px;top:434px;letter-spacing:-0.187px">Направление деятельности:</div>
<div class="fld" style="left:425px;top:429px;width:410px"><div class="fb dd" style="right:21px"></div><div class="fb" style="right:0px"><svg class="abs" style="left:6px;top:7px" width="10" height="10" viewBox="0 0 10 10"><g fill="none" stroke="#444" stroke-width="1.1"><rect x="3.55" y="0.55" width="5.4" height="5.4"/><path d="M2.2 3.5 H0.55 V9.45 H6.5 V7.6"/></g></svg></div></div>
<div class="lbl" style="left:252px;top:468px;letter-spacing:-0.048px">Порядок расчетов:</div>
<div class="fld" style="left:425px;top:463px;width:410px;letter-spacing:-0.071px">По договорам<div class="fb dd" style="right:0px"></div></div>
<div class="abs" style="left:243px;top:488px;width:504px;height:60px;border:3px solid #fa3c3e;filter:drop-shadow(1.5px 2.5px 2px rgba(0,0,0,.5))"></div>
<div class="lbl" style="left:252px;top:498px;letter-spacing:0.133px">Номер входящего</div>
<div class="lbl" style="left:252px;top:530px;letter-spacing:-0.122px">документа:</div>
<div class="fld" style="left:425px;top:497px;width:161px;letter-spacing:-0.37px">2691700</div>
<div class="lbl" style="left:596px;top:502px">от:</div>
<div class="fld" style="left:617px;top:497px;width:122px;letter-spacing:-0.198px">31.03.2022<div class="fb" style="right:0px"><svg class="abs" style="left:5px;top:6px" width="10" height="10" viewBox="0 0 10 10"><path fill="#444" d="M0.300 2 a.7 .7 0 0 1 .7 -.7 H9 a.7 .7 0 0 1 .7 .7 V9.300 a.7 .7 0 0 1 -.7 .7 H1 a.7 .7 0 0 1 -.7 -.7 Z M1.300 4 V9 H8.700 V4 Z" fill-rule="evenodd"/><rect x="2" y="0" width="1.300" height="2" fill="#444"/><rect x="6.700" y="0" width="1.300" height="2" fill="#444"/><g fill="#444"><rect x="2" y="5" width="1.200" height="1"/><rect x="4.400" y="5" width="1.200" height="1"/><rect x="6.800" y="5" width="1.200" height="1"/><rect x="2" y="7" width="1.200" height="1"/><rect x="4.400" y="7" width="1.200" height="1"/><rect x="6.800" y="7" width="1.200" height="1"/></g></svg></div></div>
<div class="abs" style="left:846px;top:226px;width:15px;height:15px;border:1px solid #a3a3a3;border-radius:3px;background:#fff"></div>
<div class="lbl" style="left:867px;top:226px;letter-spacing:-0.076px">Цена включает НДС</div>
<div class="lbl" style="left:845px;top:256px;letter-spacing:-0.286px">Налогообложение:</div>
<div class="fld" style="left:1013px;top:251px;width:410px;letter-spacing:-0.11px">Закупка облагается НДС<div class="fb dd" style="right:0px"></div></div>
<div class="lbl" style="left:845px;top:290px;letter-spacing:-0.357px">Оплата:</div>
<div class="fld" style="left:1013px;top:285px;width:410px;letter-spacing:-0.149px">Оплата в рублях<div class="fb dd" style="right:0px"></div></div>
<div class="lbl" style="left:845px;top:324px;letter-spacing:-0.03px">Закупка под деятельность:</div>
<div class="fld" style="left:1013px;top:319px;width:410px;letter-spacing:-0.162px">Не облагаемую НДС<div class="fb dd" style="right:0px"></div></div>
<div class="lbl" style="left:845px;top:358px;letter-spacing:-0.073px">Руководитель:</div>
<div class="fld" style="left:1013px;top:353px;width:410px"><div class="fb dd" style="right:21px"></div><div class="fb" style="right:0px"><svg class="abs" style="left:6px;top:7px" width="10" height="10" viewBox="0 0 10 10"><g fill="none" stroke="#444" stroke-width="1.1"><rect x="3.55" y="0.55" width="5.4" height="5.4"/><path d="M2.2 3.5 H0.55 V9.45 H6.5 V7.6"/></g></svg></div></div>
<div class="lbl" style="left:845px;top:392px;letter-spacing:-0.15px">Главный бухгалтер:</div>
<div class="fld" style="left:1013px;top:387px;width:410px"><div class="fb dd" style="right:21px"></div><div class="fb" style="right:0px"><svg class="abs" style="left:6px;top:7px" width="10" height="10" viewBox="0 0 10 10"><g fill="none" stroke="#444" stroke-width="1.1"><rect x="3.55" y="0.55" width="5.4" height="5.4"/><path d="M2.2 3.5 H0.55 V9.45 H6.5 V7.6"/></g></svg></div></div>
<a class="lnk" style="left:242px;top:968px;letter-spacing:-.058px">С "Интернет решения, ООО" возможен обмен электронными документами</a>
<a class="lnk" style="left:242px;top:1012px;letter-spacing:-.14px">Зарегистрировать счет-фактуру</a>
<div class="abs" style="left:1487px;top:966px;width:414px;height:35px;background:#f0f0f0"></div>
<div class="lbl" style="left:1492px;top:976px;letter-spacing:-.3px">НДС:</div>
<div class="abs" style="left:1525px;top:968px;width:117px;height:31px;border:2px solid #f8c311;background:#f0f0f0"></div>
<div class="abs" style="left:1586px;top:975px;width:50px;height:16px;background:#4f68c1;overflow:hidden"><div class="lbl" style="right:.5px;top:1px;color:#fff;letter-spacing:0">4 973,44</div><div class="abs" style="left:0;top:0;width:1px;height:16px;background:rgba(40,30,10,.6)"></div></div>
<div class="lbl" style="left:1649px;top:976px;letter-spacing:.1px">Всего с НДС:</div>
<div class="abs" style="left:1735px;top:971px;width:111px;height:25px;border:1px solid #d4d4d4;border-radius:3px;background:#f0f0f0"></div>
<div class="lbl" style="left:1740px;top:976px;width:103px;text-align:right;color:#222;letter-spacing:-.1px">29 840,64</div>
<div class="lbl" style="left:1856px;top:976px;letter-spacing:-.3px">RUB</div>
</div>
</body>
</html>
